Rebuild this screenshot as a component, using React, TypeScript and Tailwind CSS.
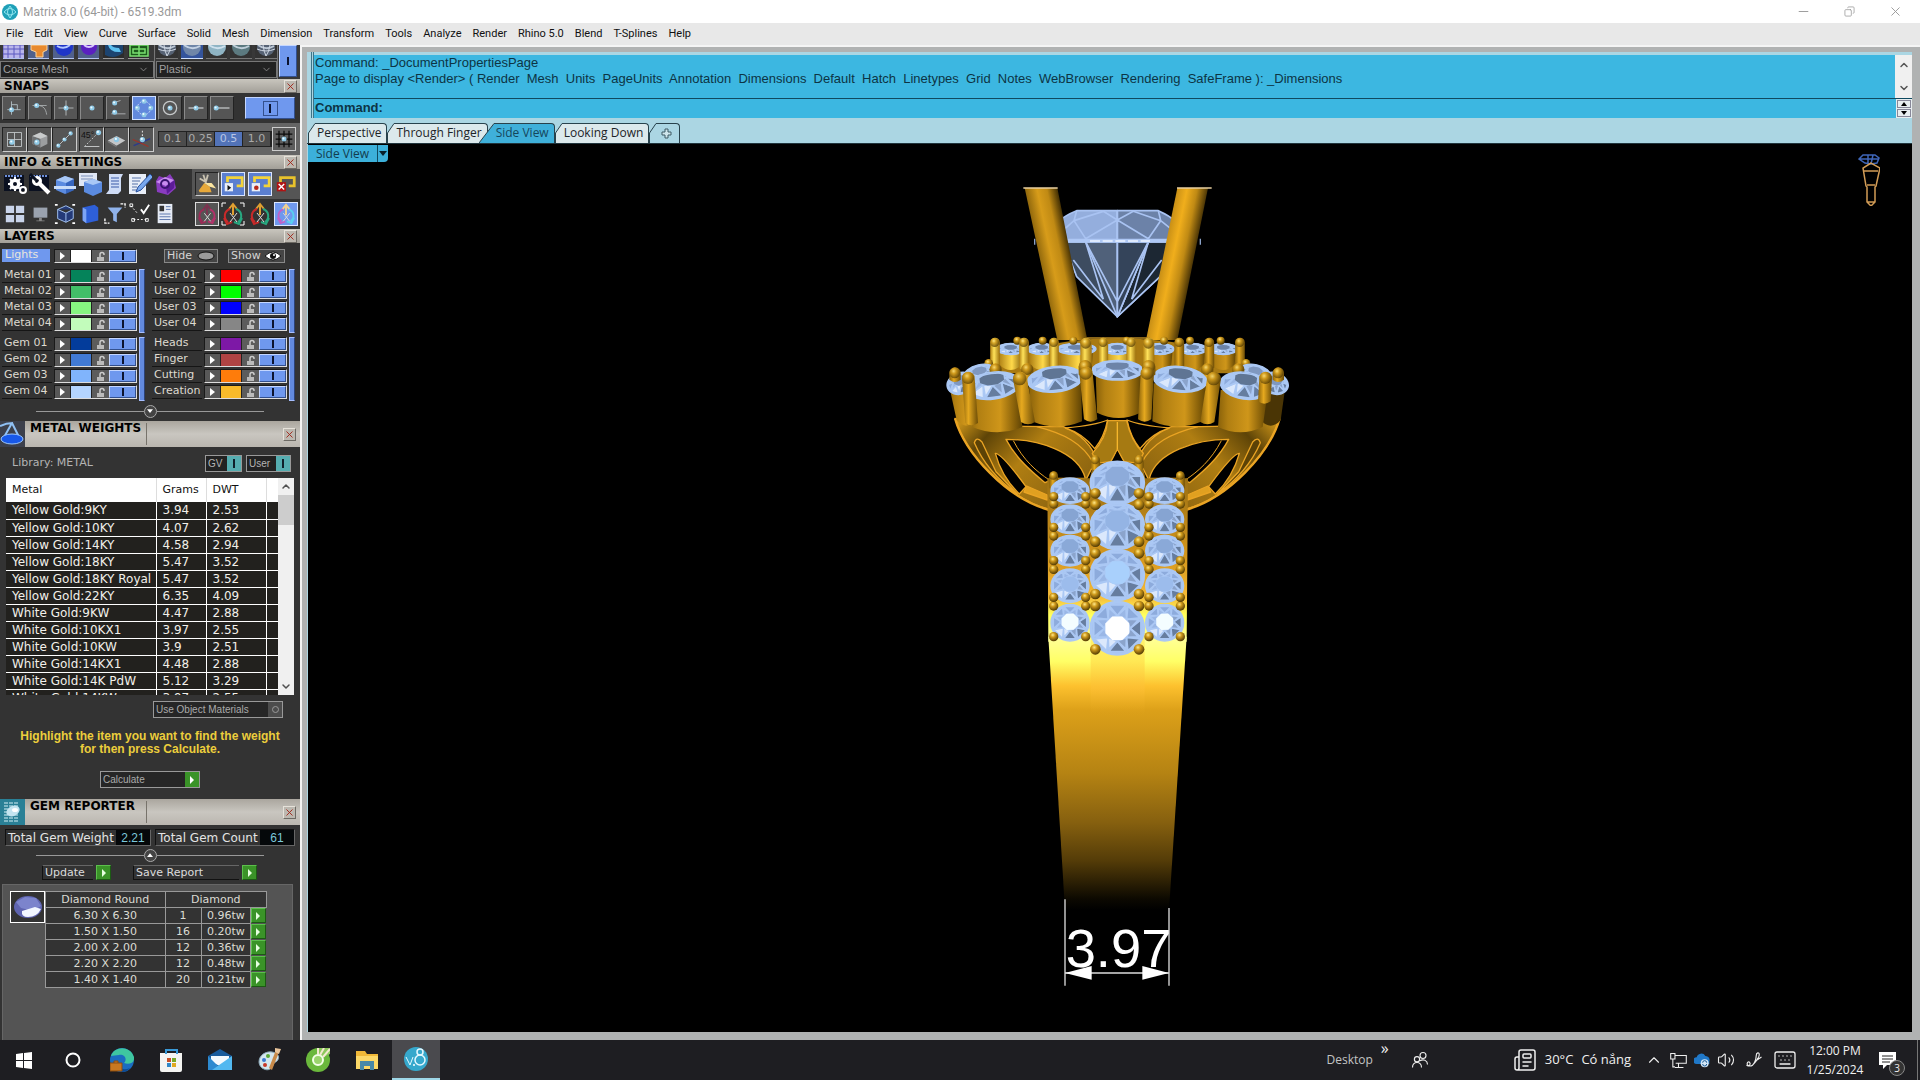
import React, { useState } from 'react';
import { ChevronDown, ChevronUp, Minus, Copy, X, Newspaper, Volume2, Keyboard } from 'lucide-react';

const menuItems = [
  'File', 'Edit', 'View', 'Curve', 'Surface', 'Solid', 'Mesh', 'Dimension', 'Transform',
  'Tools', 'Analyze', 'Render', 'Rhino 5.0', 'Blend', 'T-Splines', 'Help',
];

const commandOptions = [
  'Render', 'Mesh', 'Units', 'PageUnits', 'Annotation', 'Dimensions', 'Default', 'Hatch',
  'Linetypes', 'Grid', 'Notes', 'WebBrowser', 'Rendering', 'SafeFrame',
];

interface Layer {
  name: string;
  color: string;
}

const metalLayers: Layer[] = [
  { name: 'Metal 01', color: '#05835a' },
  { name: 'Metal 02', color: '#42be68' },
  { name: 'Metal 03', color: '#86f580' },
  { name: 'Metal 04', color: '#c2fcbb' },
];
const userLayers: Layer[] = [
  { name: 'User 01', color: '#fe0000' },
  { name: 'User 02', color: '#00fe00' },
  { name: 'User 03', color: '#0000fe' },
  { name: 'User 04', color: '#868686' },
];
const gemLayers: Layer[] = [
  { name: 'Gem 01', color: '#033c9b' },
  { name: 'Gem 02', color: '#417ad4' },
  { name: 'Gem 03', color: '#80b4fc' },
  { name: 'Gem 04', color: '#b4d4fe' },
];
const partLayers: Layer[] = [
  { name: 'Heads', color: '#7d18a6' },
  { name: 'Finger', color: '#b04343' },
  { name: 'Cutting', color: '#fe7c0b' },
  { name: 'Creation', color: '#f8ba2a' },
];

const metals = [
  ['Yellow Gold:9KY', '3.94', '2.53'],
  ['Yellow Gold:10KY', '4.07', '2.62'],
  ['Yellow Gold:14KY', '4.58', '2.94'],
  ['Yellow Gold:18KY', '5.47', '3.52'],
  ['Yellow Gold:18KY Royal', '5.47', '3.52'],
  ['Yellow Gold:22KY', '6.35', '4.09'],
  ['White Gold:9KW', '4.47', '2.88'],
  ['White Gold:10KX1', '3.97', '2.55'],
  ['White Gold:10KW', '3.9', '2.51'],
  ['White Gold:14KX1', '4.48', '2.88'],
  ['White Gold:14K PdW', '5.12', '3.29'],
  ['White Gold:14KW', '3.97', '2.55'],
];

const gems = [
  ['6.30 X 6.30', '1', '0.96tw'],
  ['1.50 X 1.50', '16', '0.20tw'],
  ['2.00 X 2.00', '12', '0.36tw'],
  ['2.20 X 2.20', '12', '0.48tw'],
  ['1.40 X 1.40', '20', '0.21tw'],
];

/* ---------- small icons ---------- */

const Icon = ({ children, className = 'size-6' }: { children: React.ReactNode; className?: string }) => (
  <svg viewBox="0 0 24 24" className={className} fill="none" aria-hidden="true">
    {children}
  </svg>
);

const Dot = ({ x, y, r = 2.4 }: { x: number; y: number; r?: number }) => (
  <>
    <circle cx={x} cy={y} r={r} fill="#8fc9e6" />
    <circle cx={x - 0.7} cy={y - 0.7} r={r / 2.4} fill="#eefaff" />
  </>
);

const snapIcons: { name: string; art: React.ReactNode }[] = [
  { name: 'Perp', art: <><path d="M9 4v16M4 14h16M9 8h7v6" stroke="#b9c6cc" /><Dot x={9} y={14} r={3} /></> },
  { name: 'Tan', art: <><path d="M3 9h17M9 9c7 0 10 4 11 11" stroke="#b0b4b6" /><Dot x={8} y={9} r={3} /></> },
  { name: 'Int', art: <><path d="M12 3v18M3 12h18" stroke="#c2c6c8" /><Dot x={12} y={12} r={3} /></> },
  { name: 'Point', art: <Dot x={12} y={12} r={3} /> },
  { name: 'Near', art: <><path d="M4 19h17M15 3l-6 2" stroke="#b9bcbe" /><Dot x={8} y={6} r={3} /><Dot x={8} y={17} r={3} /></> },
  { name: 'Quad', art: <><circle cx="12" cy="12" r="8" stroke="#e8f2ff" strokeDasharray="2 2" /><Dot x={12} y={4} r={3} /><Dot x={12} y={20} r={3} /><Dot x={4} y={12} r={3} /><Dot x={20} y={12} r={3} /></> },
  { name: 'Center', art: <><circle cx="12" cy="12" r="8" stroke="#c6c9ca" strokeWidth="1.5" /><Dot x={12} y={12} r={3} /></> },
  { name: 'Mid', art: <><path d="M3 12h18" stroke="#c6c9ca" strokeWidth="1.5" /><Dot x={12} y={12} r={3} /></> },
  { name: 'End', art: <><path d="M5 12h16" stroke="#c6c9ca" strokeWidth="1.5" /><Dot x={5} y={12} r={3} /></> },
];

const planeIcons: { name: string; art: React.ReactNode }[] = [
  { name: 'Plane grid', art: <><path d="M4 4h16v16H4zM12 4v16M4 12h16" stroke="#c4c8ca" /><Dot x={9} y={15} r={3} /></> },
  { name: 'Solid snap', art: <><path d="M4 8l9-4 8 4v9l-8 4-9-4z" fill="#9c9ea0" /><path d="M4 8l9 3v10l-9-4z" fill="#6e7072" /><path d="M4 8l9-4 8 4-8 3z" fill="#c9cbcc" /><Dot x={9} y={15} r={3} /></> },
  { name: 'Curve snap', art: <><path d="M4 20L20 4" stroke="#c6c9ca" /><Dot x={5} y={19} /><Dot x={12} y={12} /><Dot x={19} y={5} /></> },
  { name: 'Angle', art: <><path d="M4 20h17" stroke="#d0d2d3" /><path d="M4 20L19 5" stroke="#d0d2d3" strokeDasharray="2 2" /><text x="0" y="10" fontSize="10" fill="#111" fontFamily="Liberation Sans">45°</text><Dot x={20} y={4} r={3} /></> },
  { name: 'Planar', art: <><path d="M2 13l10-5 10 5-10 6z" fill="#c4c6c8" /><path d="M2 13l10 6v2L2 15z" fill="#777" /><Dot x={12} y={12} r={3} /></> },
  { name: 'Project', art: <><path d="M3 19l19-8" stroke="#2b3a8c" strokeWidth="1.5" /><path d="M2 12l18 8" stroke="#a03228" strokeWidth="1.5" /><path d="M13 2v10" stroke="#fff" strokeDasharray="2 2" /><Dot x={13} y={12} r={3} /></> },
];

const Cube = ({ fill = '#5b8be0' }: { fill?: string }) => (
  <>
    <path d="M3 8l9-4 9 3v11l-9 4-9-4z" fill={fill} />
    <path d="M3 8l9-4 9 3-8 4z" fill="#a9c8f6" />
    <path d="M13 11l8-4v11l-8 4z" fill="#1f4fa8" fillOpacity="0.6" />
  </>
);

const infoRow1: { name: string; art: React.ReactNode }[] = [
  { name: 'Options', art: <><path d="M1 3h20v16H1z" fill="#0a1020" /><path d="M2 4h18" stroke="#6d8fd8" strokeWidth="2" strokeDasharray="2 1" /><circle cx="12" cy="12" r="4" stroke="#fff" strokeWidth="3" /><path d="M12 5v14M5 12h14M7 7l10 10M17 7L7 17" stroke="#fff" strokeWidth="2" /><circle cx="12" cy="12" r="2" fill="#0a1020" /><circle cx="20" cy="18" r="3" stroke="#fff" strokeWidth="2" /></> },
  { name: 'Tools', art: <><path d="M1 3h20v16H1z" fill="#0a1020" /><path d="M2 4h18" stroke="#6d8fd8" strokeWidth="2" strokeDasharray="2 1" /><path d="M10 10l11 11" stroke="#fff" strokeWidth="4" /><circle cx="9" cy="9" r="3.5" stroke="#fff" strokeWidth="3" /><path d="M2 2l6 6" stroke="#0a1020" strokeWidth="3" /></> },
  { name: 'Section', art: <><Cube /><path d="M1 14h22v3H1z" fill="#c9dcf8" /></> },
  { name: 'Copy', art: <><path d="M1 1h18v13H1z" fill="#dfe6f4" /><path d="M3 4h12M3 7h12" stroke="#7a8fb8" /><path d="M6 10l9-3 9 3v10l-9 4-9-4z" fill="#5b8be0" /><path d="M6 10l9-3 9 3-9 3z" fill="#a9c8f6" /></> },
  { name: 'Notes', art: <><path d="M6 2h14l-2 4v13l-3 3H3l3-4z" fill="#cfdcf6" /><path d="M8 6h8M8 9h8M8 12h8M8 15h8" stroke="#3b5ba8" /></> },
  { name: 'Edit notes', art: <><path d="M1 2h17v20H1z" fill="#e8eef8" /><path d="M4 6h9M4 9h8M4 12h6M4 15h5M4 18h9" stroke="#5570a8" /><path d="M22 2l3 3-12 13-5 2 2-5z" fill="#78a8ee" stroke="#274f9c" /></> },
  { name: 'Package', art: <><path d="M3 9l3-5 6 2 5-4 4 6 2 8-8 7-11-3z" fill="#8a3cc0" /><path d="M3 10l9-5 9 3-8 6z" fill="#c98cf0" /><path d="M13 14l9-6-1 8-7 6z" fill="#5c1c98" /><circle cx="12" cy="12" r="4" stroke="#3a1470" strokeWidth="2" /></> },
];

const infoRow2: { name: string; art: React.ReactNode }[] = [
  { name: 'Viewports', art: <path d="M2 3h9v8H2zM13 3h9v8h-9zM2 13h9v8H2zM13 13h9v8h-9z" fill="#c9d4ea" /> },
  { name: 'Display', art: <><path d="M5 5h15v11H5z" fill="#9aa2ae" /><path d="M11 16h3v3h3v1H8v-1h3z" fill="#888" /></> },
  { name: 'Box edit', art: <><path d="M4 7l9-4 8 4v10l-8 4-9-4zM4 7l9 4 8-4M13 11v10" stroke="#a9c8f6" fill="#243a78" /><path d="M1 2h3M20 2h3M1 22h3M20 22h3" stroke="#fff" strokeWidth="2" /></> },
  { name: 'Library', art: <><path d="M4 5l13-3 4 3v14L8 22l-4-3z" fill="#2e5fd8" /><path d="M4 5l4 2v15l-4-3z" fill="#7da4f4" /></> },
  { name: 'Filter', art: <><path d="M4 5h16l-6 7v9l-4-2v-7z" fill="#8fb2ea" /><path d="M1 17v5h5M18 1h5v4" stroke="#fff" strokeWidth="1.5" strokeDasharray="3 1" /></> },
  { name: 'Check', art: <><path d="M2 3l7 8M5 18h14" stroke="#fff" strokeDasharray="2 2" /><path d="M1 1h3v3H1zM3 17h3v3H3zM18 17h3v3h-3z" stroke="#fff" /><path d="M13 7l3 4 6-9" stroke="#fff" strokeWidth="2" /></> },
  { name: 'Report', art: <><path d="M4 1h16v21H4z" fill="#e6ebf5" /><path d="M6 3h5v6H6z" fill="#333" /><path d="M13 4h5M13 7h5M6 12h12M6 15h12M6 18h12" stroke="#5570a8" /></> },
];

const historyIcons: { name: string; art: React.ReactNode }[] = [
  { name: 'Clean', art: <><path d="M3 19l6-8 6 4 2 6H4z" fill="#e8a93a" /><path d="M9 11l6 4 7 2-5-6z" fill="#fbe5a0" /><path d="M8 2l3 9M13 2l-2 7M4 6l7 4" stroke="#c9c2b0" strokeWidth="2" /></> },
  { name: 'Record', art: <><path d="M6 10V5h16v9h-6" stroke="#f3d33a" strokeWidth="3" /><path d="M3 11h9v9H3z" fill="#e9eef8" /><path d="M6 13l4 3-4 3z" fill="#111" /></> },
  { name: 'Replay', art: <><path d="M6 10V5h16v9h-6" stroke="#f3d33a" strokeWidth="3" /><path d="M3 11h9v9H3z" fill="#e9eef8" /><circle cx="8" cy="16" r="2.5" fill="#b82818" /></> },
  { name: 'Stop', art: <><path d="M6 10V5h15v9h-6" stroke="#e8c22c" strokeWidth="3" /><path d="M2 10h10v10H2z" fill="#b01414" /><path d="M4 12l6 6M10 12l-6 6" stroke="#fff" strokeWidth="1.5" /></> },
];

const Gumball = ({ left, right, top }: { left: string; right: string; top: string }) => (
  <>
    <path d="M12 13V3M8 7l4-5 4 5" stroke={top} strokeWidth="2" />
    <path d="M9 7C3 9 2 16 7 20M3 16l3 6 5-2" stroke={left} strokeWidth="2" />
    <path d="M15 7c6 2 7 9 2 13M21 16l-3 6-5-2" stroke={right} strokeWidth="2" />
    <path d="M9 11l7 9M16 11l-7 9" stroke="#ddd" />
  </>
);

/* ---------- sidebar pieces ---------- */

const CloseButton = ({ label }: { label: string }) => (
  <button aria-label={label} className="flex size-[13px] shrink-0 items-center justify-center border border-[#e6e2da] border-r-[#6d6a64] border-b-[#6d6a64] bg-[#bcb8b0] text-[#a02418]">
    <X className="size-[11px]" strokeWidth={2} />
  </button>
);

const SectionBar = ({ title }: { title: string }) => (
  <div className="flex h-[14px] items-center justify-between bg-linear-to-b from-[#c9c6be] to-[#a29f98] pr-[3px] pl-1">
    <h2 className="text-[12px] leading-[14px] font-bold text-black">{title}</h2>
    <CloseButton label={`Close ${title}`} />
  </div>
);

const PanelBar = ({ title, icon }: { title: string; icon: React.ReactNode }) => (
  <div className="flex h-[26px] bg-linear-to-b from-[#aaa69e] via-[#c9c6c0] to-[#bab6af]">
    <div className="h-[26px] w-[25px] shrink-0 overflow-hidden">{icon}</div>
    <div className="my-[2px] w-[122px] border-r border-[#77736b] pl-[5px]">
      <h2 className="text-[12px] leading-[11px] font-bold whitespace-nowrap text-black">{title}</h2>
    </div>
    <div className="flex flex-1 items-center justify-end pr-1">
      <CloseButton label={`Close ${title}`} />
    </div>
  </div>
);

const GreenArrow = ({ label }: { label: string }) => (
  <button aria-label={label} className="flex size-[15px] shrink-0 items-center justify-center border border-[#5cc04c] border-r-[#1c5a14] border-b-[#1c5a14] bg-[#3a9328]">
    <svg viewBox="0 0 6 8" className="h-2 w-[6px]"><path d="M1 0l4 4-4 4z" fill="#e6ffe0" /></svg>
  </button>
);

const BlueSwitch = ({ label, className }: { label: string; className: string }) => (
  <button aria-label={label} aria-pressed="true" className={`flex items-center justify-center border border-[#c4d6ff] border-r-[#33508e] border-b-[#33508e] bg-[#6f98ee] ${className}`}>
    <span className="h-2 w-[2px] bg-[#0c1430]" />
  </button>
);

const LayerControls = ({ layer }: { layer: Layer }) => (
  <div className="flex h-[14px] w-[83px] border border-[#1a1a1a] border-r-[#ddd] border-b-[#ddd] bg-[#222]">
    <button aria-label={`Select ${layer.name}`} className="flex w-[15px] items-center justify-center bg-[#585858]">
      <svg viewBox="0 0 5 8" className="h-2 w-[5px]"><path d="M0 0l5 4-5 4z" fill="#fff" /></svg>
    </button>
    <button aria-label={`${layer.name} color`} className="w-[22px] border-x border-[#222]" style={{ backgroundColor: layer.color }} />
    <button aria-label={`Lock ${layer.name}`} className="flex w-[17px] items-center justify-center bg-[#5c5c5c]">
      <svg viewBox="0 0 10 11" className="h-[11px] w-[10px]" fill="none">
        <path d="M4 6V3.500a2 2 0 0 1 4 0V4" stroke="#ccc" strokeWidth="1.500" />
        <path d="M1 6h7v4H1z" fill="#bbb" />
      </svg>
    </button>
    <BlueSwitch label={`Toggle ${layer.name}`} className="flex-1" />
  </div>
);

const LayerGroup = ({ layers }: { layers: Layer[] }) => (
  <div className="flex gap-[2px]">
    <ul className="w-[135px]">
      {layers.map((layer) => (
        <li key={layer.name} className="flex h-4 justify-between">
          <span className="h-[14px] w-[50px] overflow-visible border-b border-[#151515] pl-[2px] text-[11px] leading-[12px] whitespace-nowrap text-[#dedad0]">
            {layer.name}
          </span>
          <LayerControls layer={layer} />
        </li>
      ))}
    </ul>
    <span className="w-[6px] border border-[#a9c0ff] border-r-[#2c4277] bg-[#6289dd]" />
  </div>
);

const Splitter = ({ up }: { up?: boolean }) => (
  <div className="flex h-[14px] items-center px-9">
    <span className="h-px flex-1 bg-[#999]" />
    <button aria-label={up ? 'Collapse' : 'Expand'} className="flex size-[13px] items-center justify-center rounded-full border border-[#aaa] bg-[#444]">
      <svg viewBox="0 0 8 5" className="h-1 w-[6px]"><path d={up ? 'M0 5l4-5 4 5z' : 'M0 0l4 5 4-5z'} fill="#fff" /></svg>
    </button>
    <span className="h-px flex-1 bg-[#999]" />
  </div>
);

const Spheres = ({ colors, className }: { colors: string[]; className: string }) => (
  <div className={`flex items-end ${className}`}>
    {colors.map((color, i) => (
      <button key={i} aria-label={`Shading ${i + 1}`} className={`h-[14px] w-[22px] overflow-hidden border-b ${i === 1 ? 'border-[#cfe0ff] bg-[#34549c]' : 'border-[#777] bg-[#333]'}`}>
        <svg viewBox="0 0 22 14" className="h-[14px] w-[22px]">
          <circle cx="11" cy="2" r="9" fill={color} />
          <path d="M3 0q8 6 16 1" stroke="#e8f4ff" strokeWidth="2" fill="none" opacity="0.7" />
          {(i === 0 || i === 4) && <path d="M2 4q9 4 18 0M8 0q1 7 3 11M15 0q-1 7-4 11" stroke="#cfd8e4" fill="none" />}
        </svg>
      </button>
    ))}
  </div>
);

const Select = ({ label, value }: { label: string; value: string }) => (
  <div className="relative h-[17px] border border-[#777] bg-[#222]">
    <select aria-label={label} defaultValue={value} className="block h-[15px] w-full appearance-none bg-transparent pl-[2px] font-['Liberation_Sans',sans-serif] text-[11px] leading-[15px] text-[#a0a0a0]">
      <option>{value}</option>
    </select>
    <ChevronDown className="pointer-events-none absolute top-[2px] right-1 size-[11px] text-[#888]" />
  </div>
);

const ToolbarTop = () => (
  <div className="flex h-[34px] bg-[#383838]">
    <div className="w-[155px] border-r border-[#777]">
      <div className="flex h-4 gap-1 pl-[3px]">
        {[
          <path key="a" d="M0 0h22v14H0zM5 0v14M11 0v14M17 0v14M0 4h22M0 9h22" fill="#b9b5ea" stroke="#5a58c0" />,
          <path key="b" d="M3 0h16v5l-4 2v5H8V7L3 5z" fill="#e88a2e" stroke="#fbd39a" />,
          <g key="c"><circle cx="11" cy="2" r="9" fill="#1f35c8" /><path d="M4 1q7 4 13-1" stroke="#b4c8ff" strokeWidth="2" fill="none" /></g>,
          <g key="d"><circle cx="11" cy="2" r="8" fill="#5a20c0" /><path d="M6 0q5 4 10 0" stroke="#d8c8ff" strokeWidth="2" fill="none" /></g>,
          <g key="e"><path d="M2 0h18v8q-9 7-18 2z" fill="#1c4470" /><path d="M5 0q2 8 13 7l-2-4q-6 0-8-3z" fill="#5cc0f0" /></g>,
          <path key="f" d="M2 0h18v11H2zM11 0v11M5 4h12v4H5z" fill="#1c5a1c" stroke="#79e070" strokeWidth="1.500" />,
        ].map((art, i) => (
          <button key={i} aria-label={`Mode ${i + 1}`} className={`h-[14px] w-[21px] overflow-hidden border-b ${i < 4 ? 'border-[#b4c4f0] bg-[#50608c]' : 'border-[#999] bg-[#2c2c2c]'}`}>
            <svg viewBox="0 0 22 14" className="h-[14px] w-[22px]">{art}</svg>
          </button>
        ))}
      </div>
      <Select label="Mesh quality" value="Coarse Mesh" />
    </div>
    <div className="ml-px w-[122px] border-r border-[#777]">
      <Spheres className="h-4 gap-[3px] pb-[2px]" colors={['#566274', '#6f86a8', '#8fb4c4', '#5c7a80', '#566274']} />
      <Select label="Material" value="Plastic" />
    </div>
    <BlueSwitch label="Toggle display" className="ml-px h-8 w-[18px]" />
  </div>
);

const Snaps = () => {
  const [grid, setGrid] = useState('0.5');
  return (
    <section>
      <SectionBar title="SNAPS" />
      <div className="flex h-[30px] items-center gap-[2px] pl-[2px]">
        {snapIcons.map(({ name, art }) => (
          <button
            key={name}
            aria-label={name}
            className={`flex size-6 items-center justify-center border ${name === 'Quad' ? 'border-[#cfe0ff] bg-[#6289dd]' : 'border-[#8a8a8a] border-r-[#222] border-b-[#222] bg-[#555]'}`}
          >
            <Icon className="size-5">{art}</Icon>
          </button>
        ))}
        <button aria-label="Toggle snaps" className="ml-[9px] flex h-[22px] w-[50px] items-center justify-center border border-[#c4d6ff] border-r-[#33508e] border-b-[#33508e] bg-[#6f98ee]">
          <span className="flex size-[15px] items-center justify-center border border-[#33508e]"><span className="h-[9px] w-[2px] bg-[#0c1430]" /></span>
        </button>
      </div>
      <div className="flex h-[32px] items-center bg-[#656565] pl-[2px]">
        {planeIcons.map(({ name, art }, i) => (
          <button key={name} aria-label={name} className={`flex size-[25px] items-center justify-center border border-[#222] border-r-[#ccc] border-b-[#ccc] bg-[#555] ${i === 3 ? 'ml-[2px]' : ''}`}>
            <Icon className="size-[21px]">{art}</Icon>
          </button>
        ))}
        <div className="ml-1 flex h-4 flex-1 bg-[#222] p-px">
          {['0.1', '0.25', '0.5', '1.0'].map((step) => (
            <button
              key={step}
              onClick={() => setGrid(step)}
              className={`flex-1 border-r border-[#222] text-[11px] leading-[14px] ${step === grid ? 'bg-[#5273b8] text-[#b9c6e4]' : 'bg-[#4c4c4c] text-[#aaa]'}`}
            >
              {step}
            </button>
          ))}
        </div>
        <button aria-label="Grid snap" className="mr-1 flex size-6 items-center justify-center border border-[#ccc] bg-[#5c5c5c]">
          <Icon className="size-5"><path d="M6 2v20M12 2v20M18 2v20M2 6h20M2 12h20M2 18h20" stroke="#0a0a0a" strokeWidth="1.500" /><Dot x={12} y={12} r={3} /></Icon>
        </button>
      </div>
    </section>
  );
};

const InfoSettings = () => (
  <section>
    <SectionBar title="INFO & SETTINGS" />
    <div className="flex h-[30px] justify-between">
      <div className="flex items-center gap-px pl-[3px]">
        {infoRow1.map(({ name, art }) => (
          <button key={name} aria-label={name} className="flex size-6 items-center justify-center"><Icon>{art}</Icon></button>
        ))}
      </div>
      <div className="flex w-[108px] items-center justify-between bg-[#555] pr-[2px] pl-[3px]">
        {historyIcons.map(({ name, art }, i) => (
          <button key={name} aria-label={name} className={`flex size-6 items-center justify-center ${i === 0 ? 'border border-[#222] border-r-[#ccc] border-b-[#ccc]' : i < 3 ? 'border border-[#dbe6ff] bg-[#5b7fd0]' : ''}`}>
            <Icon className="size-[22px]">{art}</Icon>
          </button>
        ))}
      </div>
    </div>
    <div className="flex h-[30px] justify-between">
      <div className="flex items-center gap-px pl-[3px]">
        {infoRow2.map(({ name, art }) => (
          <button key={name} aria-label={name} className="flex size-6 items-center justify-center"><Icon className="size-[22px]">{art}</Icon></button>
        ))}
      </div>
      <div className="flex w-[108px] items-center justify-between pr-[2px] pl-[3px]">
        <button aria-label="Gumball off" className="size-6 border border-[#ddd] bg-[#555]"><Icon className="size-[22px]"><Gumball left="#9c2a56" right="#b4306a" top="#7c3450" /></Icon></button>
        <button aria-label="Gumball fit" className="size-6"><Icon className="size-6"><path d="M1 5V1h4M19 1h4v4M1 19v4h4M23 19v4h-4" stroke="#fff" /><Gumball left="#c82a2a" right="#28a880" top="#e0a030" /></Icon></button>
        <button aria-label="Gumball align" className="size-6"><Icon className="size-6"><Gumball left="#c82a2a" right="#28a880" top="#e0a030" /></Icon></button>
        <button aria-label="Gumball on" className="size-6 border border-[#dbe6ff] bg-[#6f98ee]"><Icon className="size-[22px]"><Gumball left="#c060c8" right="#58d0f0" top="#f0d090" /></Icon></button>
      </div>
    </div>
  </section>
);

const Layers = () => (
  <section>
    <SectionBar title="LAYERS" />
    <div className="grid grid-cols-[150px_1fr] gap-y-1 pt-[6px] pr-[2px] pl-[2px]">
      <div className="flex h-4 w-[135px] justify-between">
        <span className="h-[13px] w-[48px] bg-[#6f98ee] pl-[3px] text-[11px] leading-[12px] text-[#e9e6dc]">Lights</span>
        <LayerControls layer={{ name: 'Lights', color: '#ffffff' }} />
      </div>
      <div className="flex gap-[10px] pl-3 text-[11px] text-[#d4d4d4]">
        <button className="flex h-[14px] w-[54px] items-center justify-between border border-[#888] bg-[#444] px-[2px] leading-[12px]">
          Hide
          <svg viewBox="0 0 18 10" className="h-[10px] w-[18px]"><ellipse cx="9" cy="5" rx="8" ry="4" fill="#9a9a9a" stroke="#111" /></svg>
        </button>
        <button className="flex h-[14px] w-[57px] items-center justify-between border border-[#888] bg-[#444] px-[2px] leading-[12px]">
          Show
          <svg viewBox="0 0 18 10" className="h-[10px] w-[18px]"><path d="M1 5q8-8 16 0-8 8-16 0z" fill="#fff" stroke="#111" /><circle cx="9" cy="5" r="3" fill="#111" /><circle cx="10" cy="4" r="1" fill="#fff" /></svg>
        </button>
      </div>
      <LayerGroup layers={metalLayers} />
      <LayerGroup layers={userLayers} />
      <LayerGroup layers={gemLayers} />
      <LayerGroup layers={partLayers} />
    </div>
    <div className="pt-[3px] pb-[3px]"><Splitter /></div>
  </section>
);

const MetalWeights = () => (
  <section>
    <PanelBar
      title="METAL WEIGHTS"
      icon={
        <svg viewBox="0 0 25 26" className="h-[26px] w-[25px]">
          <path d="M0 0h25v26H0z" fill="#3c404c" />
          <path d="M0 5q6-3 13-3M12 2L3 18M12 2l8 16" stroke="#8fc0f4" fill="none" strokeWidth="2" />
          <ellipse cx="12" cy="18" rx="11" ry="5" fill="#1858e8" stroke="#9cc8ff" />
        </svg>
      }
    />
    <div className="flex h-[31px] items-center pt-[2px] pr-[9px] pl-3 text-[11px] text-[#b4b4b4]">
      <span className="flex-1 text-[11px]">Library: METAL</span>
      <button className="mr-1 flex h-[17px] w-[37px] items-center justify-between border border-[#999] bg-[#222] pl-[2px] font-['Liberation_Sans',sans-serif] text-[10px]">
        GV<span className="flex h-[15px] w-[14px] items-center justify-center bg-[#55adb0]"><span className="h-[9px] w-[2px] bg-[#10202a]" /></span>
      </button>
      <button className="flex h-[17px] w-[45px] items-center justify-between border border-[#999] bg-[#222] pl-[2px] font-['Liberation_Sans',sans-serif] text-[10px]">
        User<span className="flex h-[15px] w-[14px] items-center justify-center bg-[#55adb0]"><span className="h-[9px] w-[2px] bg-[#10202a]" /></span>
      </button>
    </div>
    <div className="mx-[6px] flex h-[217px] bg-[#22211e]">
      <div className="min-w-0 flex-1 overflow-hidden">
        <table className="w-full table-fixed border-collapse text-left text-[12px] text-[#f2f0ea]">
          <colgroup><col className="w-[150px]" /><col className="w-[50px]" /><col className="w-[60px]" /><col /></colgroup>
          <thead>
            <tr className="h-6 bg-white text-[11px] text-[#111]">
              <th className="border-r border-[#ddd] pl-[6px] font-normal">Metal</th>
              <th className="border-r border-[#ddd] pl-[6px] font-normal">Grams</th>
              <th className="border-r border-[#ddd] pl-[6px] font-normal">DWT</th>
              <th aria-label="Filler" />
            </tr>
          </thead>
          <tbody>
            {metals.map(([name, grams, dwt]) => (
              <tr key={name} className="h-[17px] border-b border-white leading-[15px]">
                <td className="border-r border-white pt-px pl-[6px] whitespace-nowrap">{name}</td>
                <td className="border-r border-white pt-px pl-[6px]">{grams}</td>
                <td className="border-r border-white pt-px pl-[6px]">{dwt}</td>
                <td />
              </tr>
            ))}
          </tbody>
        </table>
      </div>
      <div className="flex w-4 flex-col items-center bg-[#f0f0f0] text-[#505050]">
        <ChevronUp className="h-[17px] w-3" strokeWidth={3} />
        <span className="h-[30px] w-full bg-[#cdcdcd]" />
        <span className="flex-1" />
        <ChevronDown className="h-[17px] w-3" strokeWidth={3} />
      </div>
    </div>
    <div className="flex h-[23px] items-end justify-end pr-[17px]">
      <button className="flex h-[17px] w-[130px] items-center justify-between border border-[#999] bg-[#262626] pl-[2px] font-['Liberation_Sans',sans-serif] text-[10px] text-[#aaa]">
        Use Object Materials
        <span className="flex h-[15px] w-[14px] items-center justify-center bg-[#4c4c4c]"><span className="size-[7px] rounded-full border border-[#999]" /></span>
      </button>
    </div>
    <p className="pt-3 text-center font-['Liberation_Sans',sans-serif] text-[12px] leading-[13px] font-bold text-[#ecce3c]">
      Highlight the item you want to find the weight
      <br />
      for then press Calculate.
    </p>
    <div className="flex justify-center pt-[15px] pb-[11px]">
      <button className="flex h-[17px] w-[100px] items-center justify-between border border-[#999] bg-[#262626] pl-[2px] font-['Liberation_Sans',sans-serif] text-[10px] text-[#aaa]">
        Calculate
        <span className="flex h-[15px] w-[14px] items-center justify-center bg-[#3a9328]">
          <svg viewBox="0 0 6 8" className="h-2 w-[6px]"><path d="M1 0l4 4-4 4z" fill="#fff" /></svg>
        </span>
      </button>
    </div>
  </section>
);

const GemReporter = () => (
  <section className="flex min-h-0 flex-1 flex-col">
    <PanelBar
      title="GEM REPORTER"
      icon={
        <svg viewBox="0 0 25 26" className="h-[26px] w-[25px]">
          <path d="M0 0h25v26H0z" fill="#2a8096" />
          <path d="M4 4h15M4 7h15M4 10h15M4 13h15M4 16h15M4 19h15M4 22h15" stroke="#d4f0f6" strokeDasharray="4 1" />
          <ellipse cx="13" cy="12" rx="7" ry="5" fill="#c4e4f0" transform="rotate(-25 13 12)" />
          <ellipse cx="15" cy="11" rx="3" ry="2" fill="#fff" />
        </svg>
      }
    />
    <div className="flex gap-1 px-[5px] pt-1 text-[12px] text-[#e4e4e4]">
      <div className="flex h-[17px] w-[146px] items-center justify-between border border-[#111] border-r-[#666] border-b-[#666]">
        <span className="pl-[2px] whitespace-nowrap">Total Gem Weight</span>
        <span className="h-[15px] w-[34px] bg-[#05080a] text-center font-['Liberation_Sans',sans-serif] leading-[16px] text-[#7cc8dc]">2.21</span>
      </div>
      <div className="flex h-[17px] flex-1 items-center justify-between border border-[#111] border-r-[#666] border-b-[#666]">
        <span className="pl-[2px] whitespace-nowrap">Total Gem Count</span>
        <span className="h-[15px] w-[34px] bg-[#05080a] text-center font-['Liberation_Sans',sans-serif] leading-[16px] text-[#7cc8dc]">61</span>
      </div>
    </div>
    <div className="pt-[2px] pb-[3px]"><Splitter up /></div>
    <div className="flex gap-[22px] pl-[42px] text-[11px] leading-[14px] text-[#dcdcdc]">
      <div className="flex w-[69px] gap-[3px]">
        <span className="h-[15px] flex-1 border-y border-l border-[#111] border-t-[#666] pl-[2px]">Update</span>
        <GreenArrow label="Update" />
      </div>
      <div className="flex w-[124px] gap-[3px]">
        <span className="h-[15px] flex-1 border-y border-l border-[#111] border-t-[#666] pl-[2px]">Save Report</span>
        <GreenArrow label="Save Report" />
      </div>
    </div>
    <div className="mt-1 mr-[7px] ml-[2px] flex flex-1 items-start border border-b-0 border-[#666] bg-[#545454] pt-[6px] pl-[7px]">
      <div className="flex h-8 w-[35px] shrink-0 items-center justify-center border border-white bg-[#333]">
        <svg viewBox="0 0 30 26" className="h-[26px] w-[30px]">
          <ellipse cx="15" cy="13" rx="14" ry="11" fill="#5f64b0" />
          <path d="M3 8l9-5 11 1 5 8-8 5-12-3z" fill="#7c84cc" />
          <path d="M9 17l13-4 6 2q-4 8-13 8-7 0-6-6z" fill="#f2f6ff" />
        </svg>
      </div>
      <table className="w-[222px] table-fixed border-collapse text-center text-[11px] leading-[14px] text-[#dcdcd4]">
        <colgroup><col className="w-[119px]" /><col className="w-9" /><col className="w-[49px]" /><col className="w-4" /></colgroup>
        <thead>
          <tr className="h-4">
            <th className="border border-[#999] bg-[#333] font-normal">Diamond Round</th>
            <th colSpan={3} className="border border-[#999] bg-[#333] font-normal">Diamond</th>
          </tr>
        </thead>
        <tbody>
          {gems.map(([size, count, weight]) => (
            <tr key={size} className="h-4">
              <td className="border border-[#999] bg-[#333]">{size}</td>
              <td className="border border-[#999] bg-[#333]">{count}</td>
              <td className="border border-[#999] bg-[#333]">{weight}</td>
              <td className="p-0"><GreenArrow label={`Show ${size}`} /></td>
            </tr>
          ))}
        </tbody>
      </table>
    </div>
  </section>
);

/* ---------- ring model ---------- */

const polar = (cx: number, cy: number, rx: number, ry: number, deg: number) => {
  const a = (deg * Math.PI) / 180;
  return `${(cx + rx * Math.cos(a)).toFixed(1)},${(cy + ry * Math.sin(a)).toFixed(1)}`;
};

interface StoneProps {
  cx: number;
  cy: number;
  rx: number;
  ry: number;
  table: string;
  lift?: number;
  tilt?: number;
}

const eighths = [0, 45, 90, 135, 180, 225, 270, 315];

// shade of a crown facet by its direction, 0 is right and 90 is down
const facetShade = (a: number) => {
  if (a === 135 || a === 112.5) return '#dbe8fc';
  if (a < 100 || a > 330) return a % 45 ? '#8ba4cc' : '#667d9f';
  return a % 45 ? '#9ab7e6' : '#8dabdc';
};

// Round brilliant seen from the front; lift moves the table facet towards the top edge
const Stone = ({ cx, cy, rx, ry, table, lift = 0, tilt = 0 }: StoneProps) => {
  const ty = cy - ry * lift;
  const line = rx > 60 ? 5 : 4;
  return (
    <g transform={`rotate(${tilt} ${cx} ${cy})`} stroke="#abc8f4" strokeWidth={line} strokeLinejoin="round">
      <ellipse cx={cx} cy={cy} rx={rx} ry={ry} fill="#a6c3f0" />
      {eighths.map((a) => (
        <polygon
          key={a}
          points={`${polar(cx, ty, rx * 0.48, ry * 0.48, a)} ${polar(cx, cy, rx * 0.93, ry * 0.93, a - 20)} ${polar(cx, cy, rx * 0.93, ry * 0.93, a + 20)}`}
          fill={facetShade(a)}
        />
      ))}
      {eighths.map((a) => (
        <polygon
          key={a}
          points={`${polar(cx, ty, rx * 0.48, ry * 0.48, a)} ${polar(cx, ty, rx * 0.48, ry * 0.48, a + 45)} ${polar(cx, cy, rx * 0.84, ry * 0.84, a + 22.5)}`}
          fill={facetShade(a + 22.5)}
        />
      ))}
      <polygon points={eighths.map((a) => polar(cx, ty, rx * 0.48, ry * 0.48, a + 22)).join(' ')} fill={table} stroke="none" />
      <ellipse cx={cx} cy={cy} rx={rx - 3} ry={ry - 3} fill="none" />
    </g>
  );
};

const Bead = ({ x, y, r = 15 }: { x: number; y: number; r?: number }) => <circle cx={x} cy={y} r={r} fill="url(#bead)" />;

const Post = ({ x, top, bottom, w = 30, lean = 0, bright = false }: { x: number; top: number; bottom: number; w?: number; lean?: number; bright?: boolean }) => (
  <g>
    <path
      d={`M${x - w / 2} ${top + w / 2} A${w / 2} ${w / 2} 0 0 1 ${x + w / 2} ${top + w / 2} L${x + w / 2 + lean} ${bottom - 6} Q${x + lean} ${bottom + 8} ${x - w / 2 + lean} ${bottom - 6}Z`}
      fill={bright ? 'url(#postBright)' : 'url(#post)'}
    />
    <circle cx={x - 1} cy={top + w / 2} r={w / 2 - 1} fill="url(#bead)" opacity="0.75" />
  </g>
);

const Cup = ({ cx, top, bottom, w, shift = 0, fill = 'url(#cup)' }: { cx: number; top: number; bottom: number; w: number; shift?: number; fill?: string }) => (
  <path
    d={`M${cx - w / 2} ${top} L${cx + w / 2} ${top} L${cx + w / 2 + shift - 4} ${bottom - 14} Q${cx + shift} ${bottom + 18} ${cx - w / 2 + shift + 4} ${bottom - 14}Z`}
    fill={fill}
  />
);

const GalleryHalf = () => (
  <g stroke="#eaa424" strokeWidth="4" strokeLinejoin="round">
    <path d="M75 745C160 770 260 770 400 770C450 790 490 830 498 870L470 925L358 930V1018C230 985 105 850 75 745Z" fill="url(#gallery)" />
    <path d="M228 808C325 808 445 845 466 925H375L345 938C305 905 258 865 228 808Z" fill="#000" />
    <path d="M406 774C450 770 500 764 533 750C525 790 512 815 494 836C470 805 440 785 406 774Z" fill="#000" />
    <path d="M133 818Q140 798 156 816L198 905L262 972Q170 905 133 818Z" fill="#5c4206" />
    <path d="M196 850Q215 850 288 950L268 972Q215 920 196 850Z" fill="#000" />
    <path d="M290 948L352 975V990L282 966Z" fill="#e0a020" />
    <path d="M320 770C400 790 460 820 490 880" fill="none" />
    <path d="M250 812C280 870 320 905 358 930" fill="none" strokeWidth="3" />
    <path d="M75 745C105 850 230 985 358 1020" fill="none" strokeWidth="7" />
  </g>
);

const sideRows: [number, number, string, number][] = [
  [962, 38, '#86a4d2', 0.3],
  [1048, 43, '#86a4d2', 0.3],
  [1142, 46, '#8aa9d8', 0.3],
  [1247, 50, '#9cbcec', 0.1],
  [1358, 55, '#f4fdff', 0.05],
];
const centerRows: [number, number, string, number][] = [
  [938, 64, '#8dabda', 0.3],
  [1068, 70, '#94b4e4', 0.22],
  [1215, 76, '#a9d0fc', 0.1],
  [1375, 80, '#ffffff', 0],
];

const RingModel = () => (
  <svg viewBox="0 -78 1140 2664" className="h-[888px] w-[380px] shrink-0" role="img" aria-label="Ring, side view">
    <defs>
      <radialGradient id="bead" cx="0.4" cy="0.32" r="0.7">
        <stop offset="0" stopColor="#ffe98a" />
        <stop offset="0.35" stopColor="#cf9a1c" />
        <stop offset="1" stopColor="#4c3603" />
      </radialGradient>
      <linearGradient id="post">
        <stop offset="0" stopColor="#8a620a" /><stop offset="0.4" stopColor="#e6a91f" /><stop offset="1" stopColor="#6d4d06" />
      </linearGradient>
      <linearGradient id="postBright">
        <stop offset="0" stopColor="#b07f10" /><stop offset="0.4" stopColor="#ffe25a" /><stop offset="1" stopColor="#9c6f0c" />
      </linearGradient>
      <linearGradient id="cup">
        <stop offset="0" stopColor="#8a620a" /><stop offset="0.2" stopColor="#b17f12" /><stop offset="0.6" stopColor="#cf961a" /><stop offset="0.85" stopColor="#8a620a" /><stop offset="1" stopColor="#5e4305" />
      </linearGradient>
      <linearGradient id="cupBack">
        <stop offset="0" stopColor="#a97a10" /><stop offset="0.55" stopColor="#ffd94a" /><stop offset="1" stopColor="#7a5708" />
      </linearGradient>
      <linearGradient id="tubeLeft" gradientUnits="userSpaceOnUse" x1="330" y1="290" x2="425" y2="270">
        <stop offset="0" stopColor="#8a630b" /><stop offset="0.4" stopColor="#d79c1a" /><stop offset="0.7" stopColor="#c08a14" /><stop offset="1" stopColor="#4c3604" />
      </linearGradient>
      <linearGradient id="tubeRight" gradientUnits="userSpaceOnUse" x1="697" y1="270" x2="795" y2="290">
        <stop offset="0" stopColor="#c88f16" /><stop offset="0.3" stopColor="#f0ae1c" /><stop offset="0.6" stopColor="#c08a14" /><stop offset="1" stopColor="#2c1f02" />
      </linearGradient>
      <linearGradient id="gallery" x1="0" y1="0" x2="1" y2="0.6">
        <stop offset="0" stopColor="#e0a31c" /><stop offset="0.25" stopColor="#5e4407" /><stop offset="0.55" stopColor="#b07e12" /><stop offset="1" stopColor="#8c6410" />
      </linearGradient>
      <linearGradient id="shank" x1="0" y1="0" x2="0" y2="1">
        <stop offset="0" stopColor="#ffff9a" /><stop offset="0.09" stopColor="#ffff66" /><stop offset="0.18" stopColor="#fdc12e" /><stop offset="0.27" stopColor="#dca019" /><stop offset="0.5" stopColor="#b58313" /><stop offset="0.68" stopColor="#86600f" /><stop offset="0.82" stopColor="#543c08" /><stop offset="0.96" stopColor="#0c0901" /><stop offset="1" stopColor="#000" />
      </linearGradient>
      <linearGradient id="shankMid" x1="0" y1="0" x2="0" y2="1">
        <stop offset="0" stopColor="#ffee58" /><stop offset="0.3" stopColor="#ffd848" /><stop offset="0.55" stopColor="#fdbf35" /><stop offset="0.8" stopColor="#e5a61d" stopOpacity="0" />
      </linearGradient>
      <linearGradient id="bed" x1="0" y1="0" x2="0" y2="1">
        <stop offset="0" stopColor="#8f6710" /><stop offset="0.55" stopColor="#d99a1e" /><stop offset="0.75" stopColor="#f7bc38" /><stop offset="0.85" stopColor="#ffff5c" /><stop offset="1" stopColor="#ffff9a" />
      </linearGradient>
    </defs>

    {/* centre diamond */}
    <g stroke="#a9c3f2" strokeWidth="5" strokeLinejoin="round">
      <path d="M400 216L440 320L562 440L690 320L725 216Z" fill="#3d4c60" />
      <path d="M655 216L562 440L690 320L725 216Z" fill="#1c2733" />
      <path d="M467 216L562 440L655 216Z" fill="#50617a" />
      <path d="M562 216V440L655 216Z" fill="#34445a" />
      <path d="M440 122H562V210H340Q370 150 440 122Z" fill="#94aedd" />
      <path d="M562 122H685Q750 150 785 210H562Z" fill="#6c82a8" />
      <path d="M562 150L467 206M562 150L655 206M562 150L520 124L432 152L467 206M562 150L610 124L692 152L655 206M432 152L440 122M692 152L685 122M432 152L395 185M692 152L740 190M562 122V440M467 216L520 388M467 216L562 395L655 216L605 388M430 270L520 388M695 270L605 388" fill="none" />
    </g>
    <path d="M330 212H795" stroke="#aec8f5" strokeWidth="12" />
    <path d="M314 206v18M811 206v18" stroke="#8ba2c8" strokeWidth="4" />
    <path d="M480 213H660" stroke="#eef5ff" strokeWidth="5" strokeDasharray="30 8" />
    <path d="M284 54H382L472 510H382Z" fill="url(#tubeLeft)" />
    <path d="M742 54H834L742 510H648Z" fill="url(#tubeRight)" />
    <path d="M280 54h103M741 54h104" stroke="#e9cfa0" strokeWidth="5" />

    {/* far side of the halo */}
    <path d="M200 560Q562 450 925 560V610H200Z" fill="#a97a12" />
    <path d="M470 504H660" stroke="#b78722" strokeWidth="5" />
    {[242, 335, 440, 562, 690, 788, 880].map((x, i) => (
      <g key={x}>
        <Cup cx={x} top={540} bottom={598} w={i === 3 || i === 2 ? 100 : 76} fill={i < 4 ? 'url(#cupBack)' : 'url(#cup)'} />
        <Stone cx={x} cy={537} rx={i === 2 ? 58 : 42} ry={17} table="#6b83a8" lift={0.3} />
      </g>
    ))}
    {[262, 338, 430, 590, 702, 780, 872].map((x) => <Bead key={x} x={x} y={512} r={12} />)}
    {[195, 282, 372, 520, 604, 748, 838, 930].map((x) => <Post key={x} x={x} top={503} bottom={600} w={29} bright={x < 650} />)}
    <Post x={468} top={503} bottom={600} w={34} bright />
    <Post x={656} top={503} bottom={600} w={34} bright />

    {/* gallery */}
    <GalleryHalf />
    <g transform="matrix(-1 0 0 1 1124 0)"><GalleryHalf /></g>
    <path d="M533 752H590C600 800 620 830 640 850L625 880L582 874L562 838L543 874L500 880L487 850C515 820 530 790 533 752Z" fill="#a67a12" stroke="#eaa424" strokeWidth="4" />
    <path d="M562 756V838" stroke="#f6b62c" strokeWidth="4" />
    <path d="M562 842L546 880H580Z" fill="#000" />

    {/* near side of the halo */}
    <Bead x={176} y={580} r={13} />
    <Bead x={948} y={580} r={13} />
    <Stone cx={150} cy={610} rx={48} ry={26} table="#7f98c0" lift={0.3} tilt={-12} />
    <Stone cx={975} cy={610} rx={48} ry={26} table="#7f98c0" lift={0.3} tilt={12} />
    <Cup cx={92} top={650} bottom={765} w={68} shift={18} />
    <Stone cx={92} cy={640} rx={42} ry={32} table="#7f98c0" lift={0.3} tilt={-20} />
    <Cup cx={1032} top={650} bottom={765} w={68} shift={-10} fill="#4a3505" />
    <Stone cx={1034} cy={640} rx={42} ry={32} table="#7f98c0" lift={0.3} tilt={20} />
    {[75, 1045].map((x) => <Post key={x} x={x} top={592} bottom={635} w={34} />)}
    {[197, 925, 292, 832].map((x) => <Post key={x} x={x} top={580} bottom={640} w={36} />)}
    <Cup cx={375} top={640} bottom={768} w={158} shift={6} />
    <Cup cx={750} top={640} bottom={768} w={158} shift={-8} />
    <Cup cx={190} top={660} bottom={785} w={158} shift={12} />
    <Cup cx={943} top={660} bottom={785} w={142} shift={-12} />
    <Cup cx={566} top={610} bottom={742} w={138} />
    <Stone cx={375} cy={628} rx={82} ry={38} table="#5f7594" lift={0.5} tilt={-6} />
    <Stone cx={750} cy={628} rx={80} ry={38} table="#5f7594" lift={0.5} tilt={6} />
    <Stone cx={188} cy={647} rx={82} ry={40} table="#5f7594" lift={0.5} tilt={-8} />
    <Stone cx={945} cy={647} rx={74} ry={40} table="#5f7594" lift={0.5} tilt={8} />
    <Stone cx={562} cy={601} rx={76} ry={29} table="#6d84a8" lift={0.5} />
    <Post x={115} top={605} bottom={765} w={38} lean={10} />
    <Post x={270} top={605} bottom={762} w={42} lean={24} />
    <Post x={466} top={570} bottom={620} w={40} />
    <Post x={656} top={570} bottom={620} w={40} />
    <Post x={468} top={590} bottom={754} w={40} lean={14} />
    <Post x={652} top={590} bottom={754} w={40} lean={-8} />
    <Post x={852} top={605} bottom={762} w={42} lean={-20} />
    <Post x={1007} top={605} bottom={700} w={38} lean={-4} />

    {/* shank */}
    <path d="M352 925H480L490 880H636L646 925H774L770 1415H355Z" fill="url(#bed)" />
    <path d="M355 1400H770L717 2220H405Z" fill="url(#shank)" />
    <path d="M482 1380H644V1700H482Z" fill="url(#shankMid)" opacity="0.6" />
    {[496, 627].map((x) => <Post key={x} x={x} top={856} bottom={900} w={28} />)}
    {[371, 751].map((x) => <Post key={x} x={x} top={904} bottom={960} w={26} />)}
    {sideRows.map(([y, ry, table, lift]) => (
      <g key={y}>
        <Stone cx={420} cy={y} rx={57} ry={ry} table={table} lift={lift} />
        <Stone cx={704} cy={y} rx={57} ry={ry} table={table} lift={lift} />
      </g>
    ))}
    {centerRows.map(([y, ry, table, lift]) => (
      <Stone key={y} cx={562} cy={y} rx={81} ry={ry} table={table} lift={lift} />
    ))}
    {[371, 467, 657, 751].map((x) =>
      [1002, 980, 1098, 1072, 1198, 1172, 1308, 1282, 1400].map((y) => <Bead key={`${x}-${y}`} x={x} y={y} r={14} />)
    )}
    {[496, 627].map((x) =>
      [1004, 970, 1150, 1115, 1308, 1272, 1438].map((y) => <Bead key={`${x}-${y}`} x={x} y={y} r={16} />)
    )}

    {/* width dimension */}
    <g stroke="#dcdcdc" strokeWidth="4">
      <path d="M405 2188V2447M717 2214V2447M405 2409H717" />
    </g>
    <path d="M405 2409L485 2388V2429ZM717 2409L637 2388V2429Z" fill="#fff" />
    <text x="407" y="2390" fontSize="163" fill="#fff" fontFamily="Liberation Sans, Arial, sans-serif">3.97</text>
  </svg>
);

const AxisGizmo = () => (
  <svg viewBox="0 0 22 52" className="absolute top-[10px] right-8 h-[52px] w-[22px]" fill="none" aria-hidden="true">
    <path d="M1 5L5 1h12l4 3-2 5-6 1L7 9zM1 5h20M10 1v8M15 1l-2 9" stroke="#3f66b8" strokeWidth="1.500" />
    <path d="M13 9l-8 5 3 18 1 1v15l4 4 4-4V33l1-1 4-18zM6 17h14M9 31h8M9 48h8" stroke="#d29c56" strokeWidth="1.500" />
  </svg>
);

/* ---------- viewport ---------- */

const tabs = ['Perspective', 'Through Finger', 'Side View', 'Looking Down'];

const ViewTabs = () => {
  const [active, setActive] = useState('Side View');
  return (
    <div role="tablist" className="flex h-[26px] items-end border-b border-[#20343c] pl-px font-['Open_Sans',sans-serif] text-[12px] leading-[18px] text-[#1c2428]">
      {tabs.map((tab) => (
        <button
          key={tab}
          role="tab"
          aria-selected={tab === active}
          onClick={() => setActive(tab)}
          className={`flex h-5 ${tab === active ? 'relative -ml-[9px] text-[#15465c]' : ''}`}
        >
          {tab === active ? (
            <svg viewBox="0 0 17 20" className="h-5 w-[17px]"><path d="M0 20L15 0.500H17V20Z" fill="#3fb0da" /><path d="M0 20L15 0.500H17" stroke="#28424c" fill="none" /></svg>
          ) : (
            <svg viewBox="0 0 8 20" className="h-5 w-2"><path d="M0.500 20V10L7 0.500H8V20Z" fill="#dce9ec" /><path d="M0.500 20V10L7 0.500H8" stroke="#28424c" fill="none" /></svg>
          )}
          <span className={`h-5 rounded-tr-[4px] border-t border-r border-[#28424c] pr-[5px] whitespace-nowrap ${tab === active ? 'bg-[#3fb0da]' : 'bg-[#dce9ec] pl-px'}`}>{tab}</span>
        </button>
      ))}
      <button aria-label="New viewport" className="flex h-5">
        <svg viewBox="0 0 8 20" className="h-5 w-2"><path d="M0.500 20V10L7 0.500H8" stroke="#28424c" fill="none" /></svg>
        <span className="flex h-5 w-[23px] items-center rounded-tr-[4px] border-t border-r border-[#28424c] pl-1">
          <svg viewBox="0 0 11 11" className="size-[11px]"><path d="M4 1h3v3h3v3H7v3H4V7H1V4h3z" fill="#cfe6ec" stroke="#3c5a64" /></svg>
        </span>
      </button>
    </div>
  );
};

const CommandArea = () => (
  <div className="ml-1 border-l-[3px] border-double border-[#3c7488] pt-[3px] font-['Liberation_Sans',sans-serif] text-[13px] text-[#0d3444]">
    <div className="flex h-[43px] bg-[#3cb7e1]">
      <div className="flex-1 overflow-hidden pl-px leading-[16px] whitespace-pre">
        <p>Command: _DocumentPropertiesPage</p>
        <p>{`Page to display <Render> ( ${commandOptions.join('  ')} ): _Dimensions`}</p>
      </div>
      <div className="flex w-[17px] flex-col items-center justify-between bg-[#f0f0f0] py-1 text-[#555]">
        <ChevronUp className="size-3" strokeWidth={3} />
        <ChevronDown className="size-3" strokeWidth={3} />
      </div>
    </div>
    <div className="flex h-5 border-t border-[#0f4a60] bg-[#3cb7e1]">
      <label htmlFor="command" className="pl-px leading-[17px] font-bold">Command:</label>
      <input id="command" className="min-w-0 flex-1 bg-transparent px-1 outline-none" />
      <div className="flex w-4 flex-col justify-between bg-[#e8eef0] p-px">
        <button aria-label="Previous" className="flex h-2 items-center justify-center border border-[#889]"><svg viewBox="0 0 6 4" className="h-1 w-[6px]"><path d="M0 4l3-4 3 4z" /></svg></button>
        <button aria-label="Next" className="flex h-2 items-center justify-center border border-[#889]"><svg viewBox="0 0 6 4" className="h-1 w-[6px]"><path d="M0 0l3 4 3-4z" /></svg></button>
      </div>
    </div>
  </div>
);

/* ---------- taskbar ---------- */

const taskIcons: { name: string; art: React.ReactNode }[] = [
  { name: 'Start', art: <path d="M4 6l7-1v7H4zM12 5l8-1v8h-8zM4 13h7v7l-7-1zM12 13h8v8l-8-1z" fill="#fff" /> },
  { name: 'Search', art: <circle cx="12" cy="12" r="6.500" stroke="#fff" strokeWidth="2" /> },
  { name: 'Edge', art: <><circle cx="12" cy="12" r="12" fill="#1b6cc0" /><path d="M1 8C4-2 20-3 24 9c1 6-5 8-10 6 4-4 0-9-5-8-3 0-6 1-8 1z" fill="#3fc6a0" /><path d="M7 14c0 6 6 9 13 6-4 5-11 5-16 1z" fill="#0c4a94" /><path d="M0 15h12v8H0zM4 15v-2h4v2" fill="#c87820" stroke="#8a4c10" /></> },
  { name: 'Store', art: <><path d="M1 5h22v17q0 2-2 2H3q-2 0-2-2z" fill="#f4f4f2" /><path d="M7 6V2h11v4" stroke="#3a9ad8" strokeWidth="2" /><path d="M8 10h4v4H8z" fill="#c85028" /><path d="M13 10h4v4h-4z" fill="#78a828" /><path d="M8 15h4v4H8z" fill="#3088c8" /><path d="M13 15h4v4h-4z" fill="#e0a820" /></> },
  { name: 'Mail', art: <><path d="M0 8L12 1l12 7v14H0z" fill="#1a5c9c" /><path d="M3 8h18v6l-9 4-9-4z" fill="#f4fafe" /><path d="M0 8l14 14H0z" fill="#2d8ad0" /><path d="M24 8L4 22h20z" fill="#52b8f0" /></> },
  { name: 'Paint', art: <><path d="M2 14C2 7 9 3 15 4c7 1 8 6 5 9-2 2-3 1-4 4-1 4-5 6-9 4-3-1-5-4-5-7z" fill="#d4e6ee" stroke="#8aa8b8" /><circle cx="7" cy="12" r="2" fill="#3a78d0" /><circle cx="11" cy="8" r="2" fill="#58a838" /><circle cx="8" cy="17" r="2" fill="#c83828" /><path d="M19 2l3 2-7 18-3-2z" fill="#c88a4a" /><path d="M18 0l6 1-2 5-4-2z" fill="#e8c49a" /></> },
  { name: 'Browser', art: <><circle cx="12" cy="12" r="12" fill="#6ab83c" /><path d="M12 12L11-1h13v7z" fill="#8cc85c" /><circle cx="12" cy="12" r="5" fill="#9ad46c" stroke="#f4ffe8" strokeWidth="2" /><path d="M12 6L12 0M14 7l4-7M17 9l7-8" stroke="#f4e8d0" strokeWidth="2" /></> },
  { name: 'Explorer', art: <><path d="M1 3h9l2 3h11v15H1z" fill="#f0b838" /><path d="M1 8h22v13H1z" fill="#fcd868" /><path d="M5 22v-9h14v9h-4v-4H9v4z" fill="#4888a8" /></> },
  { name: 'Matrix', art: <><circle cx="12" cy="12" r="12" fill="#36a8cc" /><path d="M2 10l4 8 3-8" stroke="#e4f8ff" /><circle cx="10" cy="18" r="1" fill="#fff" /><circle cx="16" cy="5" r="3" stroke="#e4f8ff" strokeWidth="1.500" /><circle cx="16" cy="13" r="5" stroke="#e4f8ff" strokeWidth="1.500" /></> },
];

const Taskbar = () => (
  <footer className="flex h-10 shrink-0 items-stretch bg-[#1e1e22] font-['Open_Sans',sans-serif] text-[12px] text-[#f0f0f0]">
    <nav className="flex gap-px">
      {taskIcons.map(({ name, art }) => (
        <button key={name} aria-label={name} className={`flex w-12 items-center justify-center ${name === 'Matrix' ? 'border-b-2 border-[#9fd8e8] bg-[#4a4a4e]' : ''}`}>
          <Icon>{art}</Icon>
        </button>
      ))}
    </nav>
    <div className="flex flex-1 items-center justify-end">
      <span className="text-[#c4c4c4]">Desktop</span>
      <span className="ml-2 self-start text-[16px] leading-[16px]">»</span>
      <Icon className="mr-[84px] ml-[22px] size-[18px]"><circle cx="16" cy="6" r="4" stroke="#eee" strokeWidth="1.500" /><circle cx="8" cy="11" r="3.500" stroke="#eee" strokeWidth="1.500" /><path d="M2 22c0-9 12-9 12 0M12 13c5-3 10 0 10 5" stroke="#eee" strokeWidth="1.500" /></Icon>
      <Newspaper className="size-6" strokeWidth={1.5} />
      <span className="ml-2 text-[13px]">30°C</span>
      <span className="ml-2 text-[13px]">Có nắng</span>
      <ChevronUp className="ml-[14px] size-[18px]" strokeWidth={1.5} />
      <Icon className="ml-[7px] size-[17px]"><path d="M7 5h16v11H8M12 16v5M7 22h12M1 2h6v8H1zM4 10v11h3" stroke="#eee" strokeWidth="1.500" /></Icon>
      <Icon className="ml-[7px] size-4"><path d="M4 18a5 5 0 0 1 0-10 7 7 0 0 1 13-2 6 6 0 0 1 6 8v4z" fill="#2078c8" /><circle cx="16" cy="17" r="6" fill="#d4e8f8" /><path d="M13 16a3 3 0 0 1 6 0M19 18a3 3 0 0 1-6 0" stroke="#1a5a94" strokeWidth="1.500" /></Icon>
      <Volume2 className="ml-[7px] size-[18px]" strokeWidth={1.5} />
      <Icon className="ml-[10px] size-[18px]"><path d="M2 19c4 3 6-2 4-4s-6 4 0 5 9-10 9-14 4-5 4-1-8 13-8 13M16 12l6-4" stroke="#eee" strokeWidth="1.500" /></Icon>
      <Keyboard className="ml-[10px] size-6" strokeWidth={1.3} />
      <div className="ml-[8px] w-[60px] text-center leading-[19px]">
        <p>12:00 PM</p>
        <p>1/25/2024</p>
      </div>
      <button aria-label="3 notifications" className="relative ml-3 h-10 w-7">
        <svg viewBox="0 0 18 18" className="mt-px ml-[2px] size-[18px]"><path d="M0 0h17v13H8l-4 4v-4H0z" fill="#fff" /><path d="M3 4h11M3 7h11M3 10h8" stroke="#222" strokeWidth="1" /></svg>
        <span className="absolute top-5 right-0 size-4 rounded-full border border-[#888] bg-[#333] text-center text-[10px] leading-[14px]">3</span>
      </button>
      <span className="mr-[2px] ml-3 w-px self-stretch bg-[#777]" />
    </div>
  </footer>
);

const App: React.FC = () => {
  return (
    <div className="flex h-screen flex-col overflow-hidden bg-[#e8e8e8]">
      <header className="flex h-[23px] shrink-0 items-center bg-white font-['Roboto',sans-serif] text-[#999]">
        <svg viewBox="0 0 16 16" className="ml-[2px] size-4" fill="none">
          <circle cx="8" cy="8" r="8" fill="#1fa0b8" />
          <path d="M2 8q6-7 12 0-6 6-12 0zM8 2q5 6 0 12Q3 8 8 2z" stroke="#8fe4ee" />
        </svg>
        <h1 className="ml-[5px] flex-1 text-[12px]">Matrix 8.0 (64-bit) - 6519.3dm</h1>
        <button aria-label="Minimize" className="flex w-[46px] justify-center"><Minus className="size-[15px]" strokeWidth={1.5} /></button>
        <button aria-label="Restore" className="flex w-[46px] justify-center"><Copy className="size-[11px] -scale-x-100" strokeWidth={1.7} /></button>
        <button aria-label="Close" className="flex w-[46px] justify-center"><X className="size-[15px]" strokeWidth={1.5} /></button>
        <span className="w-[2px]" />
      </header>
      <nav className="flex h-[22px] shrink-0 items-center gap-[11px] bg-[#e8e8e8] pl-[6px] font-['Roboto',sans-serif] text-[11px] text-[#111]">
        {menuItems.map((item) => (
          <button key={item} className="whitespace-nowrap">{item}</button>
        ))}
      </nav>
      <div className="flex min-h-0 flex-1">
        <aside className="flex w-[300px] shrink-0 flex-col overflow-hidden bg-[#333] font-['DejaVu_Sans',Verdana,sans-serif]">
          <ToolbarTop />
          <Snaps />
          <InfoSettings />
          <Layers />
          <MetalWeights />
          <GemReporter />
        </aside>
        <main className="flex min-w-0 flex-1 flex-col border-t-2 border-l-2 border-t-[#f4f4f4] border-l-[#f4f4f4] bg-[#b0b2b2] pt-[5px] pr-2 pb-2 pl-[5px]">
          <div className="flex min-h-0 flex-1 flex-col bg-[#abd6e3]">
            <CommandArea />
            <ViewTabs />
            <div className="relative ml-px flex min-h-0 flex-1 justify-center overflow-hidden bg-black pl-5">
              <button className="absolute top-px left-0 flex h-[17px] items-center rounded-br-[4px] bg-[#3cb0da] font-['Open_Sans',sans-serif] text-[12px] text-[#123c4e]">
                <span className="px-2">Side View</span>
                <span className="flex h-[17px] w-[11px] items-center justify-center border-l border-[#0f4a60]">
                  <svg viewBox="0 0 8 5" className="h-[5px] w-2"><path d="M0 0h8L4 5z" fill="#08202c" /></svg>
                </span>
              </button>
              <RingModel />
              <AxisGizmo />
            </div>
          </div>
        </main>
      </div>
      <Taskbar />
    </div>
  );
};

export default App;
